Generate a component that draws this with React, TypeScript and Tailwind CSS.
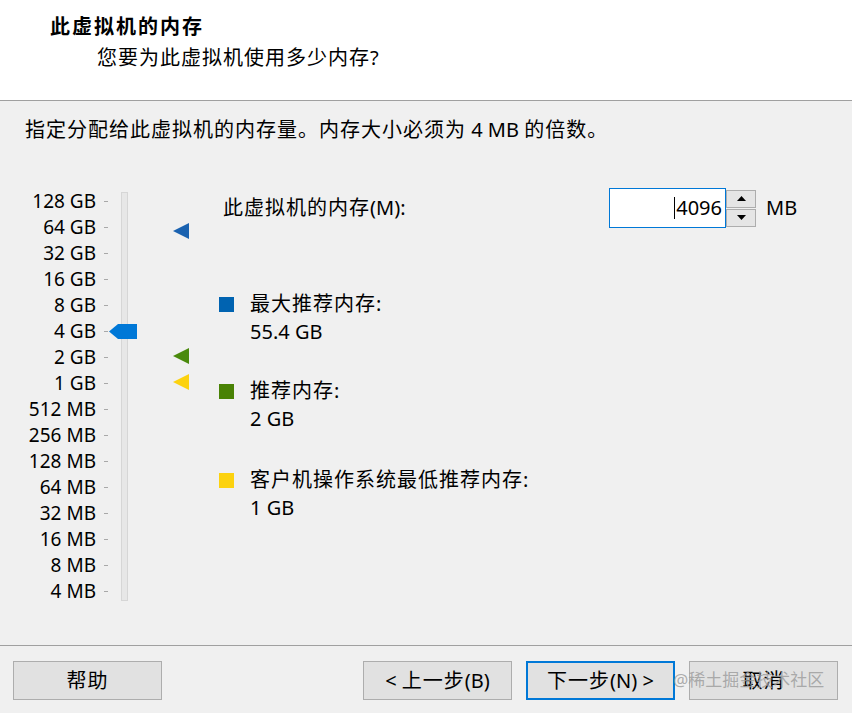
import type { ReactNode } from "react";

const FONT = { fontFamily: '"Noto Sans", "Noto Sans CJK SC", sans-serif' };

const SCALE = [
	"128 GB",
	"64 GB",
	"32 GB",
	"16 GB",
	"8 GB",
	"4 GB",
	"2 GB",
	"1 GB",
	"512 MB",
	"256 MB",
	"128 MB",
	"64 MB",
	"32 MB",
	"16 MB",
	"8 MB",
	"4 MB",
];

/* CJK runs get a little extra spacing to match the Windows font advance */
function Zh({ children }: { children: ReactNode }) {
	return <span className="tracking-[1px]">{children}</span>;
}

function Marker({ color, top }: { color: string; top: string }) {
	return (
		<svg
			viewBox="0 0 16 16"
			className={`absolute left-[173px] h-4 w-4 ${top}`}
			aria-hidden="true"
		>
			<polygon points="0,8 16,0 16,16" fill={color} />
		</svg>
	);
}

function MemoryScale() {
	return (
		<div className="relative flex w-[219px] shrink-0">
			<div className="flex flex-col">
				{SCALE.map((label) => (
					<div key={label} className="flex h-[26.07px] items-center">
						<span className="w-[96px] text-right text-[19px] leading-none text-black">
							{label}
						</span>
						<span className="ml-[8px] h-px w-[4px] bg-[#a8a8a8]" />
					</div>
				))}
			</div>
			{/* slider track */}
			<div className="ml-[13px] mt-[4px] h-[409px] w-[7px] border border-[#d6d6d6] bg-[#e7e7e7]" />

			{/* thumb at 4 GB */}
			<svg
				viewBox="0 0 28 15"
				className="absolute left-[109px] top-[136px] h-[15px] w-[28px]"
				aria-hidden="true"
			>
				<polygon points="0,7.5 9,0 28,0 28,15 9,15" fill="#0078d7" />
			</svg>

			<Marker color="#1a62b0" top="top-[35px]" />
			<Marker color="#4a8a0c" top="top-[160px]" />
			<Marker color="#fcd20f" top="top-[186px]" />
		</div>
	);
}

function Spinner() {
	return (
		<div className="flex h-[40px] w-[30px] flex-col justify-center gap-px">
			<button
				type="button"
				className="flex h-[18px] w-[30px] items-center justify-center border border-[#adadad] bg-[#e5e5e5]"
			>
				<svg viewBox="0 0 9 5" className="h-[5px] w-[9px]" aria-hidden="true">
					<polygon points="4.5,0 9,5 0,5" fill="#000" />
				</svg>
			</button>
			<button
				type="button"
				className="flex h-[18px] w-[30px] items-center justify-center border border-[#adadad] bg-[#e5e5e5]"
			>
				<svg viewBox="0 0 9 5" className="h-[5px] w-[9px]" aria-hidden="true">
					<polygon points="0,0 9,0 4.5,5" fill="#000" />
				</svg>
			</button>
		</div>
	);
}

function LegendItem({
	color,
	label,
	value,
	className,
}: {
	color: string;
	label: string;
	value: string;
	className?: string;
}) {
	return (
		<div className={`flex ${className ?? ""}`}>
			<span className={`mt-[7px] h-[15px] w-[15px] shrink-0 ${color}`} />
			<div className="ml-[16px] flex flex-col text-[20px] leading-[28px] text-black">
				<span>
					<Zh>{label}</Zh>:
				</span>
				<span>{value}</span>
			</div>
		</div>
	);
}

function WizardButton({
	children,
	primary,
	className,
}: {
	children: ReactNode;
	primary?: boolean;
	className?: string;
}) {
	return (
		<button
			type="button"
			className={`flex h-[39px] w-[149px] items-center justify-center bg-[#e1e1e1] text-[20px] leading-none text-black ${
				primary ? "border-2 border-[#0078d7]" : "border border-[#adadad]"
			} ${className ?? ""}`}
		>
			<span className="whitespace-pre">{children}</span>
		</button>
	);
}

export default function App() {
	return (
		<div
			className="flex h-screen w-full flex-col overflow-hidden bg-[#f0f0f0] text-black"
			style={FONT}
		>
			{/* Header */}
			<div className="h-[101px] shrink-0 border-b border-[#a0a0a0] bg-white">
				<div className="pl-[50px] pt-[14px] text-[20px] font-bold leading-[26px]">
					<span className="tracking-[2px]">此虚拟机的内存</span>
				</div>
				<div className="pl-[97px] pt-[5px] text-[20px] leading-[26px]">
					<Zh>您要为此虚拟机使用多少内存</Zh>?
				</div>
			</div>

			{/* Body */}
			<div className="h-[544px] shrink-0">
				<div className="pl-[25px] pt-[16px] text-[20px] leading-[26px]">
					<Zh>指定分配给此虚拟机的内存量。内存大小必须为</Zh> 4 MB{" "}
					<Zh>的倍数。</Zh>
				</div>

				<div className="mt-[45px] flex">
					<MemoryScale />

					<div className="flex flex-1 flex-col">
						<div className="flex h-[40px] items-center">
							<div className="w-[390px] pl-[4px] text-[20px] leading-none">
								<Zh>此虚拟机的内存</Zh>(M):
							</div>
							<div className="relative flex h-[40px] w-[117px] items-center justify-end border border-[#0078d7] bg-white pr-[3px] text-[20px] leading-none">
								<span className="mr-[1px] h-[22px] w-px bg-black" />
								4096
							</div>
							<Spinner />
							<span className="ml-[10px] text-[20px] leading-none">MB</span>
						</div>

						<LegendItem
							color="bg-[#0063b1]"
							label="最大推荐内存"
							value="55.4 GB"
							className="mt-[62px]"
						/>
						<LegendItem
							color="bg-[#498205]"
							label="推荐内存"
							value="2 GB"
							className="mt-[31px]"
						/>
						<LegendItem
							color="bg-[#fcd20f]"
							label="客户机操作系统最低推荐内存"
							value="1 GB"
							className="mt-[33px]"
						/>
					</div>
				</div>
			</div>

			{/* Footer */}
			<div className="relative flex flex-1 border-t border-[#a0a0a0] pl-[13px] pr-[14px] pt-[15px]">
				<WizardButton>
					<Zh>帮助</Zh>
				</WizardButton>
				<div className="flex-1" />
				<WizardButton>
					{"< "}
					<Zh>上一步</Zh>(B)
				</WizardButton>
				<WizardButton primary className="ml-[14px]">
					<Zh>下一步</Zh>
					{"(N) >"}
				</WizardButton>
				<WizardButton className="ml-[14px] w-[148px]">
					<Zh>取消</Zh>
				</WizardButton>

				{/* watermark */}
				<span className="pointer-events-none absolute left-[673px] top-[25px] text-[17px] leading-none text-[#9a9a9a]/80">
					@稀土掘金技术社区
				</span>
			</div>
		</div>
	);
}
